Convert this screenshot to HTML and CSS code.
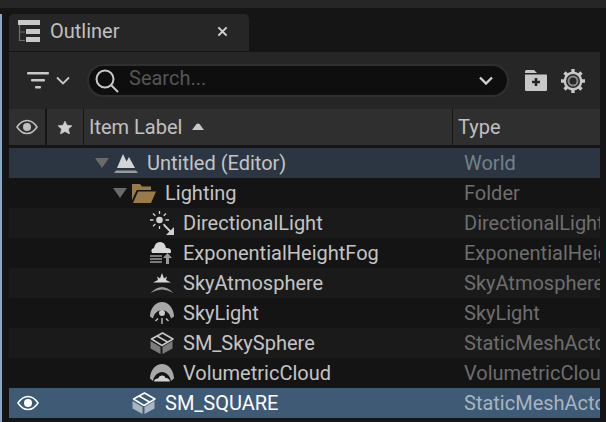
FILE: index.html
```html
<!DOCTYPE html>
<html lang="en">
<head>
<meta charset="utf-8">
<title>Outliner</title>
<link rel="stylesheet" href="styles.css">
</head>
<body>
<svg class="defs" width="0" height="0" aria-hidden="true">
  <defs>
    <symbol id="i-eye" viewBox="0 0 22 16">
      <path d="M1 8C4 3.500 7.500 1.500 11 1.500S18 3.500 21 8C18 12.500 14.500 14.500 11 14.500S4 12.500 1 8Z" fill="none" stroke="currentColor" stroke-width="1.500"/>
      <circle cx="11" cy="8" r="4" fill="currentColor"/>
    </symbol>
    <symbol id="i-mesh" viewBox="0 0 24 24">
      <path d="M.5 10 10.500 16V23L.5 17.500Z" fill="currentColor" opacity=".62"/>
      <path d="M12.500 16 22.500 10V17.500L12.500 23Z" fill="currentColor" opacity=".62"/>
      <path d="M1.500 8 12.500 2 23 8 12 14.500Z" fill="none" stroke="var(--mesh-top)" stroke-width="1.500" stroke-linejoin="round"/>
      <path d="M7 5 17.500 11" stroke="var(--mesh-top)" stroke-width="1.500"/>
    </symbol>
    <symbol id="i-skylight" viewBox="0 0 24 24">
      <path d="M0 15.500C0 7 6 1 12 1S24 7 24 15.500L21 17.500C20 12.500 16 9 12 9S4 12.500 3 17.500Z" fill="#a8a8a8"/>
      <circle cx="12" cy="12" r="3" fill="#c8c8c8"/>
      <path d="M12 17v6M5.500 20 8 17.500M18.500 20 16 17.500" stroke="#c8c8c8" stroke-width="1.300"/>
    </symbol>
    <symbol id="i-cloud" viewBox="0 0 24 24">
      <path d="M0 17.500C0 9 6 3 12 3S24 9 24 17.500L21 20C20 14.500 16 11 12 11S4 14.500 3 20Z" fill="#a8a8a8"/>
      <path d="M4 20.500Q4.500 17.500 8 17.500 9.500 14 12.500 14.500 15 14.500 15.500 17 19 16.500 20 20.500Z" fill="#cfcfcf"/>
    </symbol>
  </defs>
</svg>
<div class="topbar"></div>
<div class="workspace">
  <div class="edge"></div>
  <main class="panel">
    <div class="tabstrip">
      <div class="tab">
        <svg class="tab-icon" viewBox="0 0 22 22" aria-hidden="true">
          <rect x="0" y="0" width="22" height="5" fill="#c8c8c8"/>
          <rect x="8" y="9" width="14" height="5" fill="#c8c8c8"/>
          <rect x="8" y="17" width="14" height="5" fill="#c8c8c8"/>
          <path d="M1.500 5v15.500H7M1.500 12H7" fill="none" stroke="#6e6e6e" stroke-width="1.200"/>
        </svg>
        <span class="tab-title">Outliner</span>
        <svg class="tab-close" viewBox="0 0 12 12" aria-hidden="true"><path d="M1.500 1.500l9 9M10.500 1.500l-9 9" stroke="#d0d0d0" stroke-width="2.200"/></svg>
      </div>
    </div>
    <div class="toolbar">
      <div class="filter">
        <svg class="filter-icon" viewBox="0 0 22 18" aria-hidden="true"><rect x="0" y="0" width="22" height="2.500" rx="1" fill="#c8c8c8"/><rect x="4" y="7" width="14" height="2.500" rx="1" fill="#c8c8c8"/><rect x="8" y="14" width="6" height="2.500" rx="1" fill="#c8c8c8"/></svg>
        <svg class="chev" viewBox="0 0 14 9" aria-hidden="true"><path d="M1 1.500l6 6 6-6" fill="none" stroke="#c8c8c8" stroke-width="1.800"/></svg>
      </div>
      <div class="search">
        <svg class="search-icon" viewBox="0 0 24 24" aria-hidden="true"><circle cx="10" cy="10" r="8.500" fill="none" stroke="#c8c8c8" stroke-width="2"/><path d="M16 16l7 7" stroke="#c8c8c8" stroke-width="2"/></svg>
        <span class="search-text">Search...</span>
        <svg class="search-chev" viewBox="0 0 14 9" aria-hidden="true"><path d="M1 1.500l6 6 6-6" fill="none" stroke="#d0d0d0" stroke-width="2.400"/></svg>
      </div>
      <svg class="tool" viewBox="0 0 22 22" aria-hidden="true"><path d="M0 1.500Q0 0 1.500 0H9l3 3H0Z M0 4.500H21Q22 4.500 22 5.500V20Q22 21 21 21H1Q0 21 0 20Z" fill="#c8c8c8"/><path d="M11 8v8M7 12h8" stroke="#242424" stroke-width="2.600"/></svg>
      <svg class="tool gear" viewBox="0 0 24 24" aria-hidden="true"><circle cx="12" cy="12" r="8.200" fill="none" stroke="#c8c8c8" stroke-width="2.400"/><circle cx="12" cy="12" r="4.500" fill="none" stroke="#8a8a8a" stroke-width="2"/><path d="M12 0v4M12 20v4M0 12h4M20 12h4M3.500 3.500l3 3M17.500 17.500l3 3M20.500 3.500l-3 3M6.500 17.500l-3 3" stroke="#c8c8c8" stroke-width="3.400"/></svg>
    </div>
    <div class="header">
      <div class="head-cell col-eye"><svg class="eye" aria-hidden="true"><use href="#i-eye"/></svg></div>
      <div class="head-cell col-star thin"><svg class="star" viewBox="0 0 14 13" aria-hidden="true"><path d="M7 0 9 4.200 14 4.800 10.400 8 11.600 13 7 10.500 2.400 13 3.600 8 0 4.800 5 4.200Z" fill="#cfcfcf" stroke="#cfcfcf" stroke-width=".6" stroke-linejoin="round"/></svg></div>
      <div class="head-cell col-label thin"><span>Item Label</span><svg class="sort" viewBox="0 0 12 7" aria-hidden="true"><path d="M0 7 4.500 1Q6 0 7.500 1L12 7Z" fill="#c8c8c8"/></svg></div>
      <div class="head-cell col-type">Type</div>
    </div>
    <div class="rows">
      <div class="row world">
        <div class="col-eye"></div><div class="col-star"></div>
        <div class="tree lvl-0"><span class="tri"></span>
          <svg class="ico" viewBox="0 0 24 24" aria-hidden="true"><path d="M3 17 9 3 12.500 10.500 15 6 21 17Z" fill="#d4d4d4"/><path d="M2 19.500H22L24 22H0Z" fill="#9a9a9a"/></svg>
          <span class="name">Untitled (Editor)</span></div>
        <div class="col-type-cell">World</div>
      </div>
      <div class="row">
        <div class="col-eye"></div><div class="col-star"></div>
        <div class="tree lvl-1"><span class="tri"></span>
          <svg class="ico" viewBox="0 0 24 24" aria-hidden="true"><path d="M0 20V3h8l2 2.500h9V9H5Z" fill="#9a7a48"/><path d="M1 22 6 10.500h18L19 22Z" fill="#9a7a48"/><path d="M0 21l5-11" stroke="#151515" stroke-width="1.200"/></svg>
          <span class="name">Lighting</span></div>
        <div class="col-type-cell">Folder</div>
      </div>
      <div class="row alt">
        <div class="col-eye"></div><div class="col-star"></div>
        <div class="tree lvl-2">
          <svg class="ico" viewBox="0 0 24 24" aria-hidden="true"><circle cx="9.500" cy="9" r="3.300" fill="#d0d0d0"/><path d="M9.500 0v3M9.500 15v3M0 9h3.500M15.500 9H19M3 2.500l2.300 2.300M13.500 13l2 2M16 2.500l-2.300 2.300M5.300 13l-2.300 2.300" stroke="#d0d0d0" stroke-width="1.300"/><path d="M14 14l7 7" stroke="#d0d0d0" stroke-width="1.800"/><path d="M24 16v8h-8Z" fill="#d0d0d0"/></svg>
          <span class="name">DirectionalLight</span></div>
        <div class="col-type-cell">DirectionalLight</div>
      </div>
      <div class="row">
        <div class="col-eye"></div><div class="col-star"></div>
        <div class="tree lvl-2">
          <svg class="ico" viewBox="0 0 24 24" aria-hidden="true"><path d="M2 12Q0 8 4 7q1-6 6-6t6 6q5 0 5 3t-2 2Z" fill="#d8d8d8"/><path d="M0 15h12M0 18h12M0 21h12" stroke="#9a9a9a" stroke-width="1.600"/><path d="M13 17 17.500 12 22 17h-3v6h-3v-6Z" fill="#9a9a9a"/></svg>
          <span class="name">ExponentialHeightFog</span></div>
        <div class="col-type-cell">ExponentialHeightFog</div>
      </div>
      <div class="row alt">
        <div class="col-eye"></div><div class="col-star"></div>
        <div class="tree lvl-2">
          <svg class="ico" viewBox="0 0 24 24" aria-hidden="true"><path d="M3 11.500 8 9 7 5.500 10 7.500 12 2 14 7.500 17 5.500 16 9 21 11.500Z" fill="#d8d8d8"/><path d="M.5 22Q12 10 23.500 22Q12 15 .5 22Z" fill="#9a9a9a"/></svg>
          <span class="name">SkyAtmosphere</span></div>
        <div class="col-type-cell">SkyAtmosphere</div>
      </div>
      <div class="row">
        <div class="col-eye"></div><div class="col-star"></div>
        <div class="tree lvl-2">
          <svg class="ico" aria-hidden="true"><use href="#i-skylight"/></svg>
          <span class="name">SkyLight</span></div>
        <div class="col-type-cell">SkyLight</div>
      </div>
      <div class="row alt">
        <div class="col-eye"></div><div class="col-star"></div>
        <div class="tree lvl-2">
          <svg class="ico mesh" aria-hidden="true"><use href="#i-mesh"/></svg>
          <span class="name">SM_SkySphere</span></div>
        <div class="col-type-cell">StaticMeshActor</div>
      </div>
      <div class="row">
        <div class="col-eye"></div><div class="col-star"></div>
        <div class="tree lvl-2">
          <svg class="ico" aria-hidden="true"><use href="#i-cloud"/></svg>
          <span class="name">VolumetricCloud</span></div>
        <div class="col-type-cell">VolumetricCloud</div>
      </div>
      <div class="row selected">
        <div class="col-eye"><svg class="eye" aria-hidden="true"><use href="#i-eye"/></svg></div><div class="col-star"></div>
        <div class="tree lvl-1b">
          <svg class="ico mesh" aria-hidden="true"><use href="#i-mesh"/></svg>
          <span class="name">SM_SQUARE</span></div>
        <div class="col-type-cell">StaticMeshActor</div>
      </div>
    </div>
  </main>
</div>
</body>
</html>
```
FILE: styles.css
```css
* { box-sizing: border-box; }
html, body { margin: 0; height: 100%; }
body {
  width: 606px;
  height: 422px;
  overflow: hidden;
  background: #151515;
  font-family: Roboto, "Liberation Sans", sans-serif;
  color: #c0c0c0;
  display: flex;
  flex-direction: column;
}
.defs { position: absolute; }
.topbar { height: 8px; background: #262626; flex: none; }
.workspace { flex: 1; display: flex; min-height: 0; padding-top: 6px; }
.edge { width: 2px; background: #8aa9c9; flex: none; }
.panel { width: 591px; margin-left: 7px; display: flex; flex-direction: column; }
.tabstrip { height: 38px; flex: none; border-bottom: 1px solid #151515; }
.tab {
  width: 240px; height: 37px; background: #262626;
  border-radius: 5px 5px 0 0;
  display: flex; align-items: center;
  padding-bottom: 3px;
}
.tab-icon { width: 22px; height: 22px; margin-left: 9px; }
.tab-title { margin-left: 10px; font-size: 20px; color: #c0c0c0; }
.tab-close { width: 11px; height: 11px; margin-left: auto; margin-right: 21px; }
.toolbar {
  height: 57px; flex: none; background: #262626;
  display: flex; align-items: center;
}
.filter { display: flex; align-items: center; width: 78px; padding-left: 18px; }
.filter-icon { width: 22px; height: 18px; }
.chev { width: 14px; height: 9px; margin-left: 7px; }
.search {
  width: 422px; height: 33px; border-radius: 17px;
  background: #0e0e0e; border: 2px solid #2f2f2f;
  display: flex; align-items: center; padding-left: 6px; padding-right: 14px;
}
.search-icon { width: 24px; height: 24px; }
.search-text { margin-left: 10px; font-size: 20px; color: #555; padding-bottom: 6px; }
.search-chev { width: 14px; height: 9px; margin-left: auto; }
.tool { width: 22px; height: 22px; margin-left: 16px; }
.gear { width: 24px; height: 24px; margin-left: 14px; }
.header { height: 36px; flex: none; background: #2f2f2f; display: flex; margin-bottom: 3px; }
.head-cell {
  display: flex; align-items: center; font-size: 20px; color: #c0c0c0;
  border-right: 2px solid #151515;
}
.head-cell.thin { border-right-width: 1px; }
.col-eye { width: 38px; flex: none; display: flex; align-items: center; justify-content: center; }
.col-star { width: 37px; flex: none; display: flex; align-items: center; justify-content: center; }
.col-label { width: 369px; padding-left: 5px; }
.col-type { flex: 1; padding-left: 5px; border-right: 0; }
.star { width: 14px; height: 13px; }
.eye { width: 22px; height: 16px; color: #c0c0c0; }
.sort { width: 12px; height: 7px; margin-left: 10px; margin-bottom: 2px; }
.rows { display: flex; flex-direction: column; }
.row { height: 30px; display: flex; align-items: center; background: #141414; font-size: 20px; white-space: nowrap; }
.row.alt { background: #1a1a1a; }
.row.world { background: #2b3642; }
.row.selected { background: #3f5a74; color: #fff; }
.row.selected .eye { color: #fff; }
.tree { width: 380px; flex: none; display: flex; align-items: center; overflow: hidden; }
.lvl-0 { padding-left: 11px; }
.lvl-1 { padding-left: 29px; }
.lvl-1b { padding-left: 48px; }
.lvl-2 { padding-left: 66px; }
.tri {
  width: 0; height: 0; flex: none;
  border-left: 7px solid transparent; border-right: 7px solid transparent;
  border-top: 10px solid #6a6a6a;
  margin-right: 5px;
}
.ico { width: 24px; height: 24px; flex: none; color: #b8b8b8; --mesh-top: #c8c8c8; }
.row.selected .ico { color: #e8eef4; --mesh-top: #ffffff; }
.name { margin-left: 9px; color: #c4c4c4; }
.row.selected .name { color: #fff; }
.col-type-cell { flex: 1; min-width: 0; overflow: hidden; color: #6e6e6e; }
.row.selected .col-type-cell { color: #a8b4c0; }
.row.world .col-type-cell { color: #75808a; }
```
